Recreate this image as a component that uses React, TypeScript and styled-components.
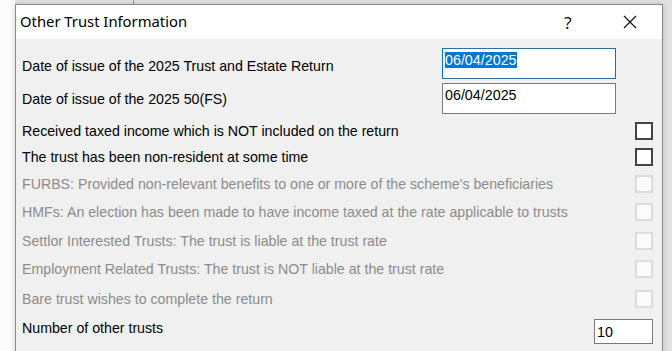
import styled, { createGlobalStyle } from "styled-components";

const GlobalStyle = createGlobalStyle`
  html, body {
    margin: 0;
    padding: 0;
    background: #f4f4f4;
    overflow: hidden;
  }
`;

const Backdrop = styled.div`
  width: 672px;
  height: 351px;
  box-sizing: border-box;
  padding: 4px 0 0 15px;
  background:
    linear-gradient(#9a9a9a, #9a9a9a) 133px 0 / 1px 5px no-repeat,
    linear-gradient(to right, #fbfbfb 0, #fbfbfb 15px, #e2e2e2 15px) 0 0 / 100% 100% no-repeat;
  overflow: hidden;
`;

const Dialog = styled.div`
  width: 648px;
  height: 360px;
  box-sizing: border-box;
  border: 1px solid #8a8a8a;
  background: #f0f0f0;
  box-shadow: 0 0 6px rgba(0, 0, 0, 0.18);
  display: flex;
  flex-direction: column;
`;

const TitleBar = styled.div`
  height: 34px;
  background: #ffffff;
  display: flex;
  align-items: center;
  padding-left: 4px;
  font-family: "Noto Sans", "Open Sans", sans-serif;
  font-size: 14.8px;
  color: #000;
`;

const Title = styled.span`
  flex: 1;
  padding-bottom: 2px;
`;

const TitleButton = styled.span<{ $w: number }>`
  width: ${(p) => p.$w}px;
  display: flex;
  justify-content: center;
  align-items: center;
  font-family: "Noto Sans", sans-serif;
  font-size: 17px;
  color: #111;
`;

const Body = styled.div`
  display: flex;
  flex-direction: column;
  padding: 9px 9px 0 6px;
  font-family: "Liberation Sans", Arial, sans-serif;
  font-size: 14.2px;
`;

const Row = styled.div<{ $h: number; $mb?: number }>`
  height: ${(p) => p.$h}px;
  margin-bottom: ${(p) => p.$mb ?? 0}px;
  display: flex;
  align-items: center;
`;

const Label = styled.span<{ $disabled?: boolean; $shift?: number }>`
  flex: 1;
  color: ${(p) => (p.$disabled ? "#8c8c8c" : "#000")};
  position: relative;
  top: ${(p) => p.$shift ?? 0}px;
  white-space: nowrap;
`;

const DateBox = styled.div<{ $focused?: boolean }>`
  width: 174px;
  height: 31px;
  box-sizing: border-box;
  margin-right: 37px;
  background: #fff;
  border: 1px solid ${(p) => (p.$focused ? "#0078d7" : "#7a7a7a")};
  padding: 3px 0 0 2px;
  font-family: "Liberation Sans", Arial, sans-serif;
  font-size: 14.3px;
  line-height: 16px;
`;

const Selected = styled.span`
  background: #0078d7;
  color: #fff;
`;

const Check = styled.span<{ $disabled?: boolean }>`
  width: 18px;
  height: 18px;
  box-sizing: border-box;
  border: 2px solid ${(p) => (p.$disabled ? "#dcdcdc" : "#444")};
  background: ${(p) => (p.$disabled ? "#fbfbfb" : "#fff")};
`;

const NumberBox = styled.div`
  width: 59px;
  height: 25px;
  box-sizing: border-box;
  margin-top: 8px;
  background: #fff;
  border: 1px solid #7a7a7a;
  padding: 4px 0 0 2px;
  font-size: 14.3px;
  line-height: 16px;
`;

const CloseIcon = () => (
  <svg width="14" height="14" viewBox="0 0 14 14">
    <path d="M1 1 L13 13 M13 1 L1 13" stroke="#111" strokeWidth="1.2" fill="none" />
  </svg>
);

const checks = [
  { text: "Received taxed income which is NOT included on the return", h: 27 },
  { text: "The trust has been non-resident at some time", h: 26 },
  { text: "FURBS: Provided non-relevant benefits to one or more of the scheme's beneficiaries", h: 27, off: true },
  { text: "HMFs: An election has been made to have income taxed at the rate applicable to trusts", h: 29, off: true },
  { text: "Settlor Interested Trusts: The trust is liable at the trust rate", h: 29, off: true },
  { text: "Employment Related Trusts: The trust is NOT liable at the trust rate", h: 27, off: true },
  { text: "Bare trust wishes to complete the return", h: 33, off: true },
];

export default function App() {
  return (
    <>
      <GlobalStyle />
      <Backdrop>
        <Dialog>
          <TitleBar>
            <Title>Other Trust Information</Title>
            <TitleButton $w={60}>?</TitleButton>
            <TitleButton $w={64}>
              <CloseIcon />
            </TitleButton>
          </TitleBar>
          <Body>
            <Row $h={31} $mb={4}>
              <Label $shift={2}>Date of issue of the 2025 Trust and Estate Return</Label>
              <DateBox $focused>
                <Selected>06/04/2025</Selected>
              </DateBox>
            </Row>
            <Row $h={31} $mb={3}>
              <Label>Date of issue of the 2025 50(FS)</Label>
              <DateBox>06/04/2025</DateBox>
            </Row>
            {checks.map((c) => (
              <Row key={c.text} $h={c.h}>
                <Label $disabled={c.off}>{c.text}</Label>
                <Check $disabled={c.off} />
              </Row>
            ))}
            <Row $h={25}>
              <Label>Number of other trusts</Label>
              <NumberBox>10</NumberBox>
            </Row>
          </Body>
        </Dialog>
      </Backdrop>
    </>
  );
}
